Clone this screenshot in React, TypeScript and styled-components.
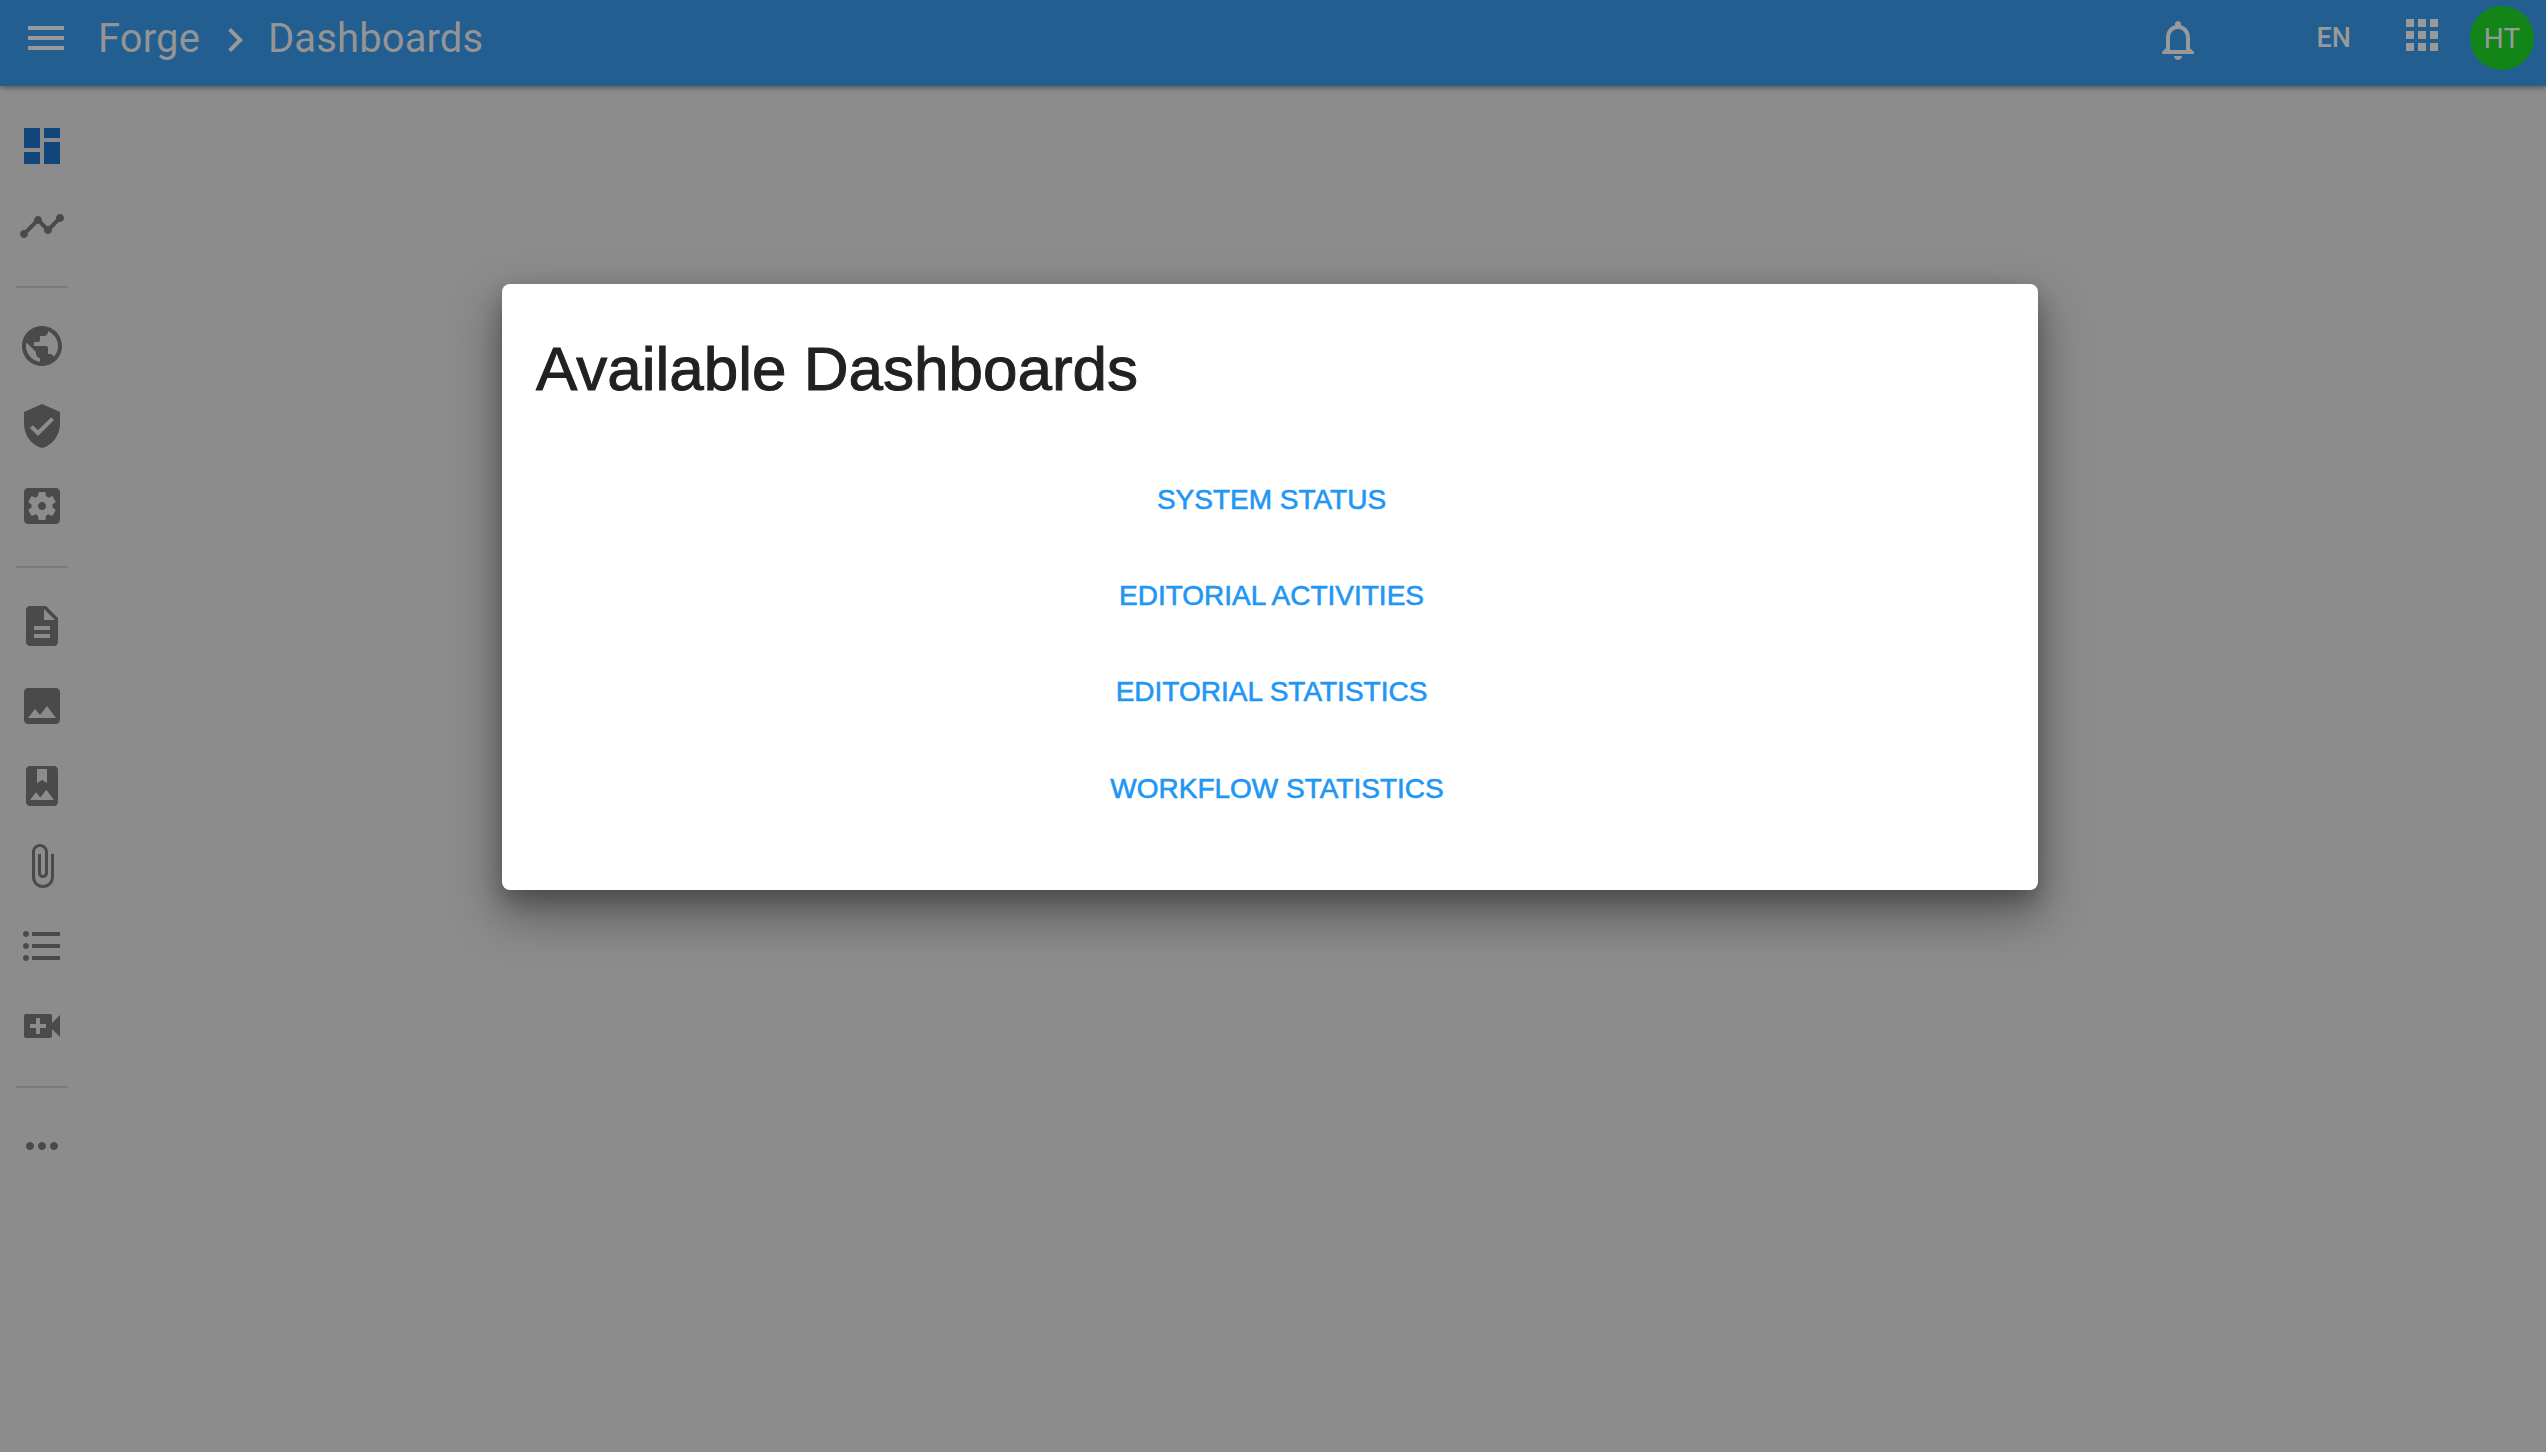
import React from "react";
import styled, { createGlobalStyle } from "styled-components";

const Global = createGlobalStyle`
  html, body { margin: 0; padding: 0; height: 100%; background: #8c8c8c; }
  #root { height: 100%; }
  * { box-sizing: border-box; }
`;

const Page = styled.div`
  position: relative;
  width: 2546px;
  height: 1452px;
  overflow: hidden;
  background: #8c8c8c;
  display: flex;
  flex-direction: column;
  font-family: Roboto, "Liberation Sans", sans-serif;
`;

const TopBar = styled.header`
  height: 86px;
  flex: none;
  background: #225e90;
  color: #999999;
  display: flex;
  align-items: center;
  box-shadow: 0 2px 5px rgba(0, 0, 0, 0.35);
  position: relative;
`;

const BarIcon = styled.svg<{ $left?: number; $right?: number; $up?: number }>`
  width: 48px;
  height: 48px;
  flex: none;
  fill: #999999;
  margin-left: ${(p) => p.$left ?? 0}px;
  margin-right: ${(p) => p.$right ?? 0}px;
  transform: translateY(${(p) => p.$up ?? 0}px);
`;

const Crumb = styled.span<{ $left?: number }>`
  font-size: 40px;
  font-weight: 400;
  line-height: 48px;
  margin-left: ${(p) => p.$left ?? 0}px;
  color: #949494;
  letter-spacing: 0.12px;
  transform: translateY(-4px);
`;

const Spacer = styled.div`
  flex: 1;
`;

const Lang = styled.span`
  font-size: 27px;
  font-weight: 500;
  line-height: 32px;
  color: #999999;
  transform: translateY(-5px);
`;

const Avatar = styled.div`
  width: 64px;
  height: 64px;
  border-radius: 50%;
  background: #138518;
  color: #999999;
  font-size: 28px;
  display: flex;
  align-items: center;
  justify-content: center;
  margin-left: 24px;
  margin-right: 12px;
  transform: translateY(-5px);
`;

const Body = styled.div`
  flex: 1;
  display: flex;
`;

const Sidebar = styled.nav`
  width: 84px;
  flex: none;
  padding-top: 20px;
  display: flex;
  flex-direction: column;
  align-items: stretch;
`;

const NavItem = styled.div`
  height: 80px;
  display: flex;
  align-items: center;
  justify-content: center;
`;

const NavIcon = styled.svg<{ $active?: boolean }>`
  width: 48px;
  height: 48px;
  fill: ${(p) => (p.$active ? "#10467a" : "#4a4a4a")};
`;

const NavDivider = styled.div`
  height: 40px;
  padding-top: 1px;
  display: flex;
  align-items: center;
  justify-content: center;
  &::after {
    content: "";
    width: 52px;
    height: 2px;
    background: #7a7a7a;
  }
`;

const Dialog = styled.section`
  position: absolute;
  left: 502px;
  top: 284px;
  width: 1536px;
  height: 606px;
  background: #ffffff;
  border-radius: 8px;
  box-shadow: 0 22px 48px 4px rgba(0, 0, 0, 0.36), 0 10px 20px rgba(0, 0, 0, 0.2);
  font-family: "Liberation Sans", Arial, sans-serif;
  padding: 49px 34px 0;
  display: flex;
  flex-direction: column;
`;

const Title = styled.h2`
  margin: 0;
  font-size: 62px;
  line-height: 72px;
  font-weight: 400;
  color: #212121;
  -webkit-text-stroke: 1px #212121;
`;

const Links = styled.div`
  margin-top: 47px;
  display: flex;
  flex-direction: column;
  align-items: center;
`;

const LinkButton = styled.button<{ $shift?: number; $extra?: number }>`
  height: 96px;
  border: 0;
  background: none;
  padding: 0;
  font-family: "Liberation Sans", Arial, sans-serif;
  font-size: 28px;
  color: #2196f3;
  letter-spacing: 0;
  -webkit-text-stroke: 0.6px #2196f3;
  text-transform: uppercase;
  margin-left: ${(p) => p.$shift ?? 0}px;
  margin-top: ${(p) => p.$extra ?? 0}px;
`;

const nav: { d: string; active?: boolean }[] = [
  { d: "M3 13h8V3H3v10zm0 8h8v-6H3v6zm10 0h8V10h-8v11zm0-19v6h8V3h-8z", active: true },
  { d: "M23 8c0 1.1-.9 2-2 2-.18 0-.35-.02-.51-.07l-3.56 3.55c.05.16.07.34.07.52 0 1.1-.9 2-2 2s-2-.9-2-2c0-.18.02-.36.07-.52l-2.55-2.55c-.16.05-.34.07-.52.07s-.36-.02-.52-.07l-4.55 4.56c.05.16.07.33.07.51 0 1.1-.9 2-2 2s-2-.9-2-2 .9-2 2-2c.18 0 .35.02.51.07l4.56-4.55C8.02 9.36 8 9.18 8 9c0-1.1.9-2 2-2s2 .9 2 2c0 .18-.02.36-.07.52l2.55 2.55c.16-.05.34-.07.52-.07s.36.02.52.07l3.55-3.56C19.02 8.35 19 8.18 19 8c0-1.1.9-2 2-2s2 .9 2 2z" },
];
const nav2 = [
  "M12 2C6.48 2 2 6.48 2 12s4.48 10 10 10 10-4.48 10-10S17.52 2 12 2zm-1 17.93c-3.95-.49-7-3.85-7-7.93 0-.62.08-1.21.21-1.79L9 15v1c0 1.1.9 2 2 2v1.93zm6.9-2.54c-.26-.81-1-1.39-1.9-1.39h-1v-3c0-.55-.45-1-1-1H8v-2h2c.55 0 1-.45 1-1V7h2c1.1 0 2-.9 2-2v-.41c2.93 1.19 5 4.06 5 7.41 0 2.08-.8 3.97-2.1 5.39z",
  "M12 1L3 5v6c0 5.55 3.84 10.74 9 12 5.16-1.26 9-6.45 9-12V5l-9-4zm-2 16l-4-4 1.41-1.41L10 14.17l6.59-6.59L18 9l-8 8z",
  "M12 10c-1.1 0-2 .9-2 2s.9 2 2 2 2-.9 2-2-.9-2-2-2zm7-7H5c-1.11 0-2 .9-2 2v14c0 1.1.89 2 2 2h14c1.11 0 2-.9 2-2V5c0-1.1-.89-2-2-2zm-1.75 9c0 .23-.02.46-.05.68l1.48 1.16c.13.11.17.3.08.45l-1.4 2.42c-.09.15-.27.21-.43.15l-1.74-.7c-.36.28-.76.51-1.18.69l-.26 1.85c-.03.17-.18.3-.35.3h-2.8c-.17 0-.32-.13-.35-.29l-.26-1.85c-.43-.18-.82-.41-1.18-.69l-1.74.7c-.16.06-.34 0-.43-.15l-1.4-2.42c-.09-.15-.05-.34.08-.45l1.48-1.16c-.03-.23-.05-.46-.05-.69 0-.23.02-.46.05-.68l-1.48-1.16c-.13-.11-.17-.3-.08-.45l1.4-2.42c.09-.15.27-.21.43-.15l1.74.7c.36-.28.76-.51 1.18-.69l.26-1.85c.03-.17.18-.3.35-.3h2.8c.17 0 .32.13.35.29l.26 1.85c.43.18.82.41 1.18.69l1.74-.7c.16-.06.34 0 .43.15l1.4 2.42c.09.15.05.34-.08.45l-1.48 1.16c.03.23.05.46.05.69z",
];
const nav3 = [
  "M14 2H6c-1.1 0-1.99.9-1.99 2L4 20c0 1.1.89 2 1.99 2H18c1.1 0 2-.9 2-2V8l-6-6zm2 16H8v-2h8v2zm0-4H8v-2h8v2zm-3-5V3.5L18.5 9H13z",
  "M21 19V5c0-1.1-.9-2-2-2H5c-1.1 0-2 .9-2 2v14c0 1.1.9 2 2 2h14c1.1 0 2-.9 2-2zM8.5 13.5l2.5 3.01L14.5 12l4.5 6H5l3.5-4.5z",
  "M18 2H6c-1.1 0-2 .9-2 2v16c0 1.1.9 2 2 2h12c1.1 0 2-.9 2-2V4c0-1.1-.9-2-2-2zM9.5 3.5h5v7L12 9l-2.5 1.5v-7zM6 19l3-3.86 2.14 2.58 3-3.86L18 19H6z",
  "M16.5 6v11.5c0 2.21-1.79 4-4 4s-4-1.79-4-4V5c0-1.38 1.12-2.5 2.5-2.5s2.5 1.12 2.5 2.5v10.5c0 .55-.45 1-1 1s-1-.45-1-1V6H10v9.5c0 1.38 1.12 2.5 2.5 2.5s2.5-1.12 2.5-2.5V5c0-2.21-1.79-4-4-4S7 2.79 7 5v12.5c0 3.04 2.46 5.5 5.5 5.5s5.5-2.46 5.5-5.5V6h-1.5z",
  "M4 10.5c-.83 0-1.5.67-1.5 1.5s.67 1.5 1.5 1.5 1.5-.67 1.5-1.5-.67-1.5-1.5-1.5zm0-6c-.83 0-1.5.67-1.5 1.5S3.17 7.5 4 7.5 5.5 6.83 5.5 6 4.83 4.5 4 4.5zm0 12c-.83 0-1.5.68-1.5 1.5s.68 1.5 1.5 1.5 1.5-.68 1.5-1.5-.67-1.5-1.5-1.5zM7 19h14v-2H7v2zm0-6h14v-2H7v2zm0-8v2h14V5H7z",
  "M17 10.5V7c0-.55-.45-1-1-1H4c-.55 0-1 .45-1 1v10c0 .55.45 1 1 1h12c.55 0 1-.45 1-1v-3.5l4 4v-11l-4 4zM14 13h-3v3H9v-3H6v-2h3V8h2v3h3v2z",
];
const more = "M6 10c-1.1 0-2 .9-2 2s.9 2 2 2 2-.9 2-2-.9-2-2-2zm12 0c-1.1 0-2 .9-2 2s.9 2 2 2 2-.9 2-2-.9-2-2-2zm-6 0c-1.1 0-2 .9-2 2s.9 2 2 2 2-.9 2-2-.9-2-2-2z";

const Item = ({ d, active }: { d: string; active?: boolean }) => (
  <NavItem>
    <NavIcon viewBox="0 0 24 24" $active={active}>
      <path d={d} />
    </NavIcon>
  </NavItem>
);

export default function App() {
  return (
    <Page>
      <Global />
      <TopBar>
        <BarIcon viewBox="0 0 24 24" $left={22} $up={-5}>
          <path d="M3 18h18v-2H3v2zm0-5h18v-2H3v2zm0-7v2h18V6H3z" />
        </BarIcon>
        <Crumb $left={28}>Forge</Crumb>
        <BarIcon viewBox="0 0 24 24" $left={11} $up={-3}>
          <path d="M10 6L8.59 7.41 13.17 12l-4.58 4.59L10 18l6-6z" />
        </BarIcon>
        <Crumb $left={9}>Dashboards</Crumb>
        <Spacer />
        <BarIcon viewBox="0 0 24 24" $up={-3} $right={115}>
          <path d="M12 22c1.1 0 2-.9 2-2h-4c0 1.1.9 2 2 2zm6-6v-5c0-3.07-1.63-5.64-4.5-6.32V4c0-.83-.67-1.5-1.5-1.5s-1.5.67-1.5 1.5v.68C7.64 5.36 6 7.92 6 11v5l-2 2v1h16v-1l-2-2zm-2 1H8v-6c0-2.48 1.51-4.5 4-4.5s4 2.02 4 4.5v6z" />
        </BarIcon>
        <Lang>EN</Lang>
        <BarIcon viewBox="0 0 24 24" $left={47} $up={-8}>
          <path d="M4 8h4V4H4v4zm6 12h4v-4h-4v4zm-6 0h4v-4H4v4zm0-6h4v-4H4v4zm6 0h4v-4h-4v4zm6-10v4h4V4h-4zm-6 4h4V4h-4v4zm6 6h4v-4h-4v4zm0 6h4v-4h-4v4z" />
        </BarIcon>
        <Avatar>HT</Avatar>
      </TopBar>
      <Body>
        <Sidebar>
          {nav.map((n) => (
            <Item key={n.d} d={n.d} active={n.active} />
          ))}
          <NavDivider />
          {nav2.map((d) => (
            <Item key={d} d={d} />
          ))}
          <NavDivider />
          {nav3.map((d) => (
            <Item key={d} d={d} />
          ))}
          <NavDivider />
          <Item d={more} />
        </Sidebar>
      </Body>
      <Dialog>
        <Title>Available Dashboards</Title>
        <Links>
          <LinkButton $shift={3}>System Status</LinkButton>
          <LinkButton $shift={3}>Editorial Activities</LinkButton>
          <LinkButton $shift={3}>Editorial Statistics</LinkButton>
          <LinkButton $shift={14} $extra={1}>Workflow Statistics</LinkButton>
        </Links>
      </Dialog>
    </Page>
  );
}
